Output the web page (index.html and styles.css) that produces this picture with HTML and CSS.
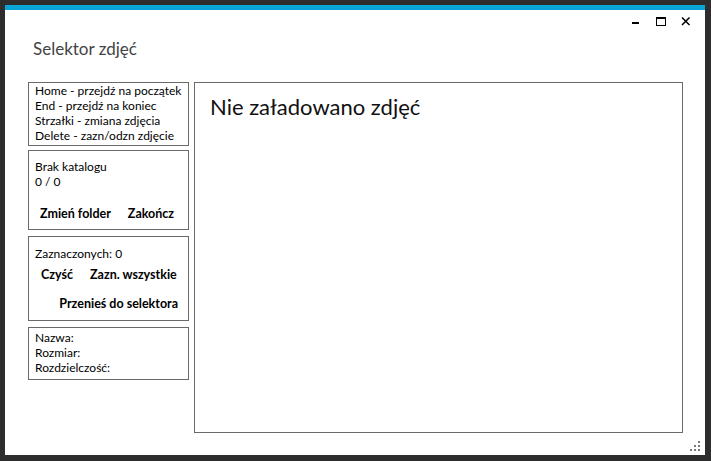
FILE: index.html
```html
<!DOCTYPE html>
<html lang="pl">
<head>
<meta charset="utf-8">
<title>Selektor zdjęć</title>
<link rel="stylesheet" href="styles.css">
</head>
<body>
<div class="window">
  <header class="titlebar">
    <h1 class="title">Selektor zdjęć</h1>
    <div class="controls">
      <svg class="ctl" width="10" height="9" viewBox="0 0 10 9"><rect x="1" y="5" width="7" height="2" fill="#000"/></svg>
      <svg class="ctl" width="10" height="9" viewBox="0 0 10 9"><rect x="0.5" y="1" width="9" height="7.5" fill="none" stroke="#000" stroke-width="1"/><rect x="0" y="0" width="10" height="2" fill="#000"/></svg>
      <svg class="ctl" width="10" height="9" viewBox="0 0 10 9"><path d="M1 0.5 L8.5 8 M8.5 0.5 L1 8" stroke="#000" stroke-width="1.5" fill="none"/></svg>
    </div>
  </header>
  <div class="content">
    <aside class="sidebar">
      <div class="panel panel-keys">
        <div class="line">Home - przejdź na początek</div>
        <div class="line">End - przejdź na koniec</div>
        <div class="line">Strzałki - zmiana zdjęcia</div>
        <div class="line">Delete - zazn/odzn zdjęcie</div>
      </div>
      <div class="panel panel-folder">
        <div class="line">Brak katalogu</div>
        <div class="line">0 / 0</div>
        <div class="btn-row btn-row-folder">
          <button class="btn">Zmień folder</button>
          <button class="btn">Zakończ</button>
        </div>
      </div>
      <div class="panel panel-select">
        <div class="line">Zaznaczonych: 0</div>
        <div class="btn-row btn-row-select">
          <button class="btn">Czyść</button>
          <button class="btn">Zazn. wszystkie</button>
        </div>
        <div class="btn-row btn-row-move">
          <button class="btn">Przenieś do selektora</button>
        </div>
      </div>
      <div class="panel panel-info">
        <div class="line">Nazwa:</div>
        <div class="line">Rozmiar:</div>
        <div class="line">Rozdzielczość:</div>
      </div>
    </aside>
    <section class="viewer">
      <p class="empty">Nie załadowano zdjęć</p>
    </section>
  </div>
  <svg class="grip" width="11" height="11" viewBox="0 0 11 11">
    <rect x="8" y="0" width="2" height="2" fill="#7a7a7a"/>
    <rect x="4" y="4" width="2" height="2" fill="#7a7a7a"/>
    <rect x="8" y="4" width="2" height="2" fill="#7a7a7a"/>
    <rect x="0" y="8" width="2" height="2" fill="#7a7a7a"/>
    <rect x="4" y="8" width="2" height="2" fill="#7a7a7a"/>
    <rect x="8" y="8" width="2" height="2" fill="#7a7a7a"/>
  </svg>
</div>
</body>
</html>
```
FILE: styles.css
```css
html, body {
  margin: 0;
  padding: 0;
}

body {
  background: #2d2d2d;
  font-family: Lato, "Open Sans", sans-serif;
  color: #000;
  width: 711px;
  height: 461px;
  overflow: hidden;
}

.window {
  position: relative;
  margin: 5px;
  width: 700px;
  height: 445px;
  background: #fff;
  border-top: 5px solid #0aa5d7;
  display: flex;
  flex-direction: column;
}

.titlebar {
  height: 72px;
  display: flex;
  justify-content: space-between;
  align-items: flex-start;
  flex: none;
}

.title {
  margin: 0;
  padding: 28px 0 0 28px;
  font-size: 17px;
  line-height: 22px;
  font-weight: 400;
  color: #444;
}

.controls {
  display: flex;
  gap: 15px;
  padding: 7px 14px 0 0;
}

.ctl {
  display: block;
}

.content {
  flex: 1;
  display: flex;
  gap: 5px;
  padding: 0 22px 22px 23px;
  min-height: 0;
}

.sidebar {
  width: 161px;
  flex: none;
  display: flex;
  flex-direction: column;
}

.panel {
  border: 1px solid #6a6a6a;
  padding: 0 6px;
  font-size: 12px;
  line-height: 15px;
  margin-bottom: 6px;
  box-sizing: border-box;
}

.panel-keys {
  height: 64px;
  margin-bottom: 4px;
}

.panel-folder {
  height: 80px;
  padding-top: 8px;
}

.panel-select {
  height: 85px;
  padding-top: 9px;
}

.panel-info {
  height: 53px;
  padding-top: 2px;
}

.line {
  white-space: nowrap;
}

.btn-row {
  display: flex;
}

.btn {
  font-family: inherit;
  font-size: 12.5px;
  font-weight: 700;
  line-height: 16px;
  padding: 0;
  margin: 0;
  border: 0;
  background: transparent;
  color: #000;
  white-space: nowrap;
}

.btn-row-folder {
  margin-top: 17px;
  padding-left: 5px;
  gap: 17px;
}

.btn-row-select {
  margin-top: 6px;
  padding-left: 6px;
  gap: 17px;
}

.btn-row-move {
  margin-top: 13px;
  justify-content: flex-end;
  padding-right: 4px;
}

.viewer {
  flex: 1;
  border: 1px solid #6a6a6a;
}

.empty {
  margin: 0;
  padding: 10px 0 0 15px;
  font-size: 22px;
  line-height: 28px;
  color: #111;
}

.grip {
  position: absolute;
  right: 4px;
  bottom: 3px;
}
```
